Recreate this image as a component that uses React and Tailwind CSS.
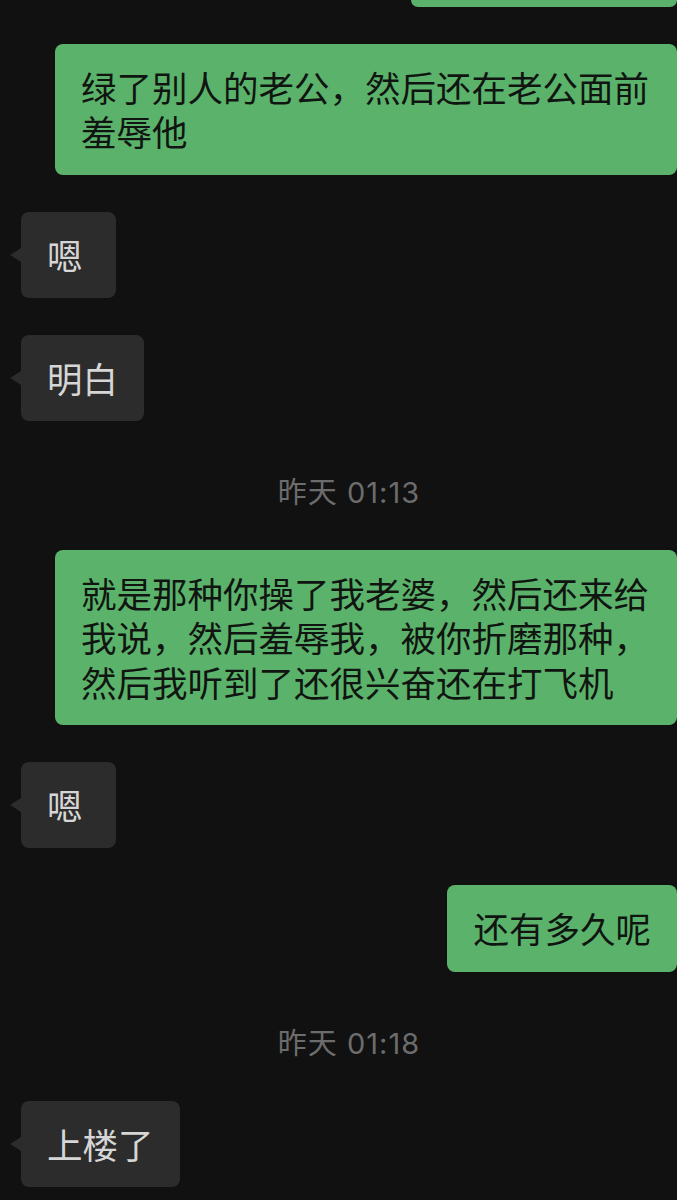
import React from "react";

const font = { fontFamily: '"Noto Sans CJK SC", "Noto Sans", sans-serif' };

const messages = [
  { type: "me", text: "绿了别人的老公，然后还在老公面前羞辱他" },
  { type: "other", text: "嗯" },
  { type: "other", text: "明白" },
  { type: "time", text: "昨天 01:13" },
  {
    type: "me",
    text: "就是那种你操了我老婆，然后还来给我说，然后羞辱我，被你折磨那种，然后我听到了还很兴奋还在打飞机",
  },
  { type: "other", text: "嗯" },
  { type: "me", text: "还有多久呢" },
  { type: "time", text: "昨天 01:18" },
  { type: "other", text: "上楼了" },
];

const MyBubble = ({ text }) => (
  <div className="flex justify-end pl-[55px] mt-[37px]">
    <div className="bg-[#5bb36b] text-[#111511] rounded-lg px-[26px] py-[21px] text-[35.5px] leading-[44.3px] break-all">
      {text}
    </div>
  </div>
);

const OtherBubble = ({ text }) => (
  <div className="flex justify-start pl-[21px] mt-[37px]">
    <div className="relative bg-[#2c2c2c] text-[#d6d6d6] rounded-lg px-[26px] py-[21px] text-[35.5px] leading-[44.3px] min-w-[95px]">
      <span className="absolute left-[-11px] top-1/2 -mt-[7px] w-0 h-0 border-y-[7px] border-y-transparent border-r-[11px] border-r-[#2c2c2c]" />
      {text}
    </div>
  </div>
);

const TimeStamp = ({ text }) => (
  <div className="flex justify-center pl-[21px] mt-[57px] mb-[42px] h-[30px] items-center text-[29px] tracking-[1px] text-[#6c6c6c] font-['Inter','Noto_Sans_CJK_SC',sans-serif]">
    {text}
  </div>
);

const App = () => {
  return (
    <div className="min-h-[1200px] w-[677px] bg-[#111111] overflow-hidden" style={font}>
      <div className="flex justify-end">
        <div className="w-[266px] h-[7px] bg-[#5bb36b] rounded-b-lg" />
      </div>
      {messages.map((m, i) => {
        if (m.type === "me") return <MyBubble key={i} text={m.text} />;
        if (m.type === "other") return <OtherBubble key={i} text={m.text} />;
        return <TimeStamp key={i} text={m.text} />;
      })}
    </div>
  );
};

export default App;
